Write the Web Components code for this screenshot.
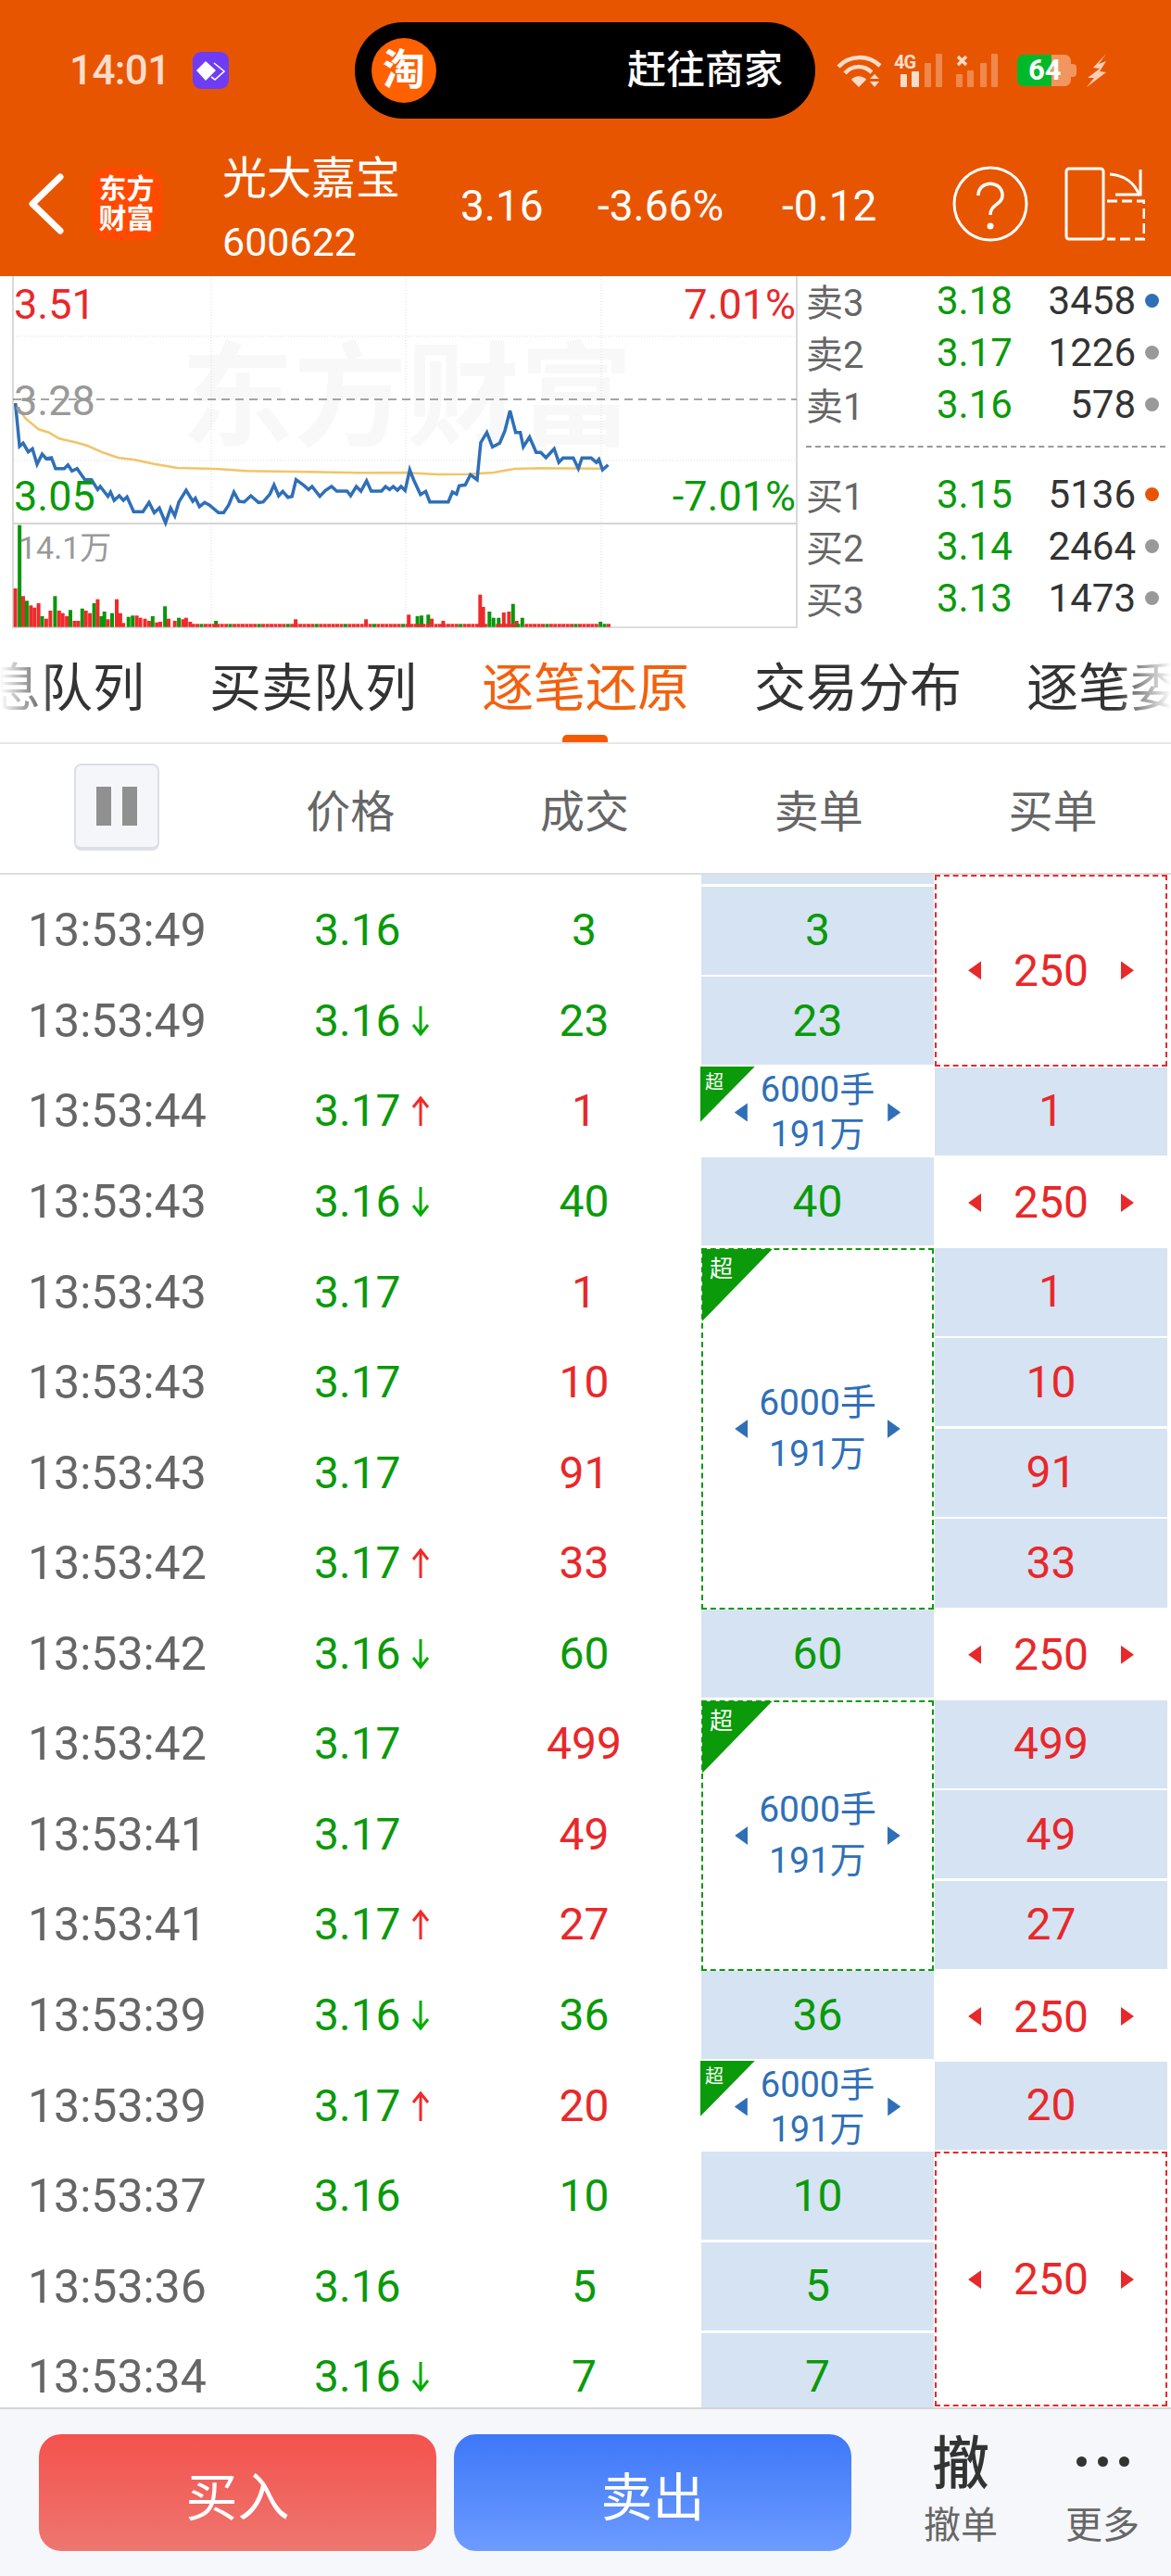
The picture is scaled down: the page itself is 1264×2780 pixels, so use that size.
<!DOCTYPE html>
<html lang="zh-CN">
<head>
<meta charset="utf-8">
<title>光大嘉宝</title>
<style>
  html, body { margin: 0; padding: 0; background: #fff; }
  body {
    width: 1264px;
    height: 2780px;
    overflow: hidden;
    font-family: Roboto, "Noto Sans CJK SC", sans-serif;
    --red: #e8282a;
    --green: #0a9a0a;
    --blue: #2f6fb8;
    --cell: #d6e3f2;
  }
  .top { display: flex; }
</style>
</head>
<body>
<status-strip></status-strip>
<quote-head></quote-head>
<div class="top">
  <mini-chart></mini-chart>
  <order-book></order-book>
</div>
<tab-strip active="2">
  <span>消息队列</span><span>买卖队列</span><span>逐笔还原</span><span>交易分布</span><span>逐笔委托</span>
</tab-strip>
<column-head></column-head>
<tick-table></tick-table>
<action-bar></action-bar>

<script>
// Base helper: open shadow root from a template string
class ShadowPart extends HTMLElement {
  constructor() {
    super();
    this.attachShadow({ mode: "open" });
    let t = document.createElement("template");
    t.innerHTML = this.markup;
    this.shadowRoot.appendChild(t.content.cloneNode(true));
  }
}

class StatusStrip extends ShadowPart {
  get markup() {
    return `
    <style>
      :host { display: flex; align-items: center; height: 128px; padding: 24px 0 0 75px; box-sizing: border-box; background: #e85500; color: #fff; }
      .time { font-size: 44px; font-weight: 500; color: #fbdccb; line-height: 50px; width: 103px; letter-spacing: -.6px; white-space: nowrap; }
      .app { margin-left: 30px; width: 39px; height: 40px; border-radius: 9px; background: #6f3cf5; }
      .pill { margin-left: 136px; width: 497px; height: 104px; border-radius: 52px; background: #000; display: flex; align-items: center; padding: 0 35px 0 18px; box-sizing: border-box; justify-content: space-between; }
      .tao { width: 70px; height: 70px; border-radius: 50%; background: #ff6000; font-size: 46px; font-weight: 700; text-align: center; line-height: 68px; }
      .go { font-size: 42px; font-weight: 500; line-height: 50px; }
      svg { display: block; flex: none; }
      .wifi { margin-left: 23px; }
      .sig { position: relative; margin-left: 12px; width: 52px; height: 37px; }
      .sig b { position: absolute; left: 0; top: -1px; font-size: 20px; line-height: 20px; font-weight: 700; color: #fbdccb; letter-spacing: -1px; }
      .x { margin-left: 15px; }
      .bat { margin-left: 20px; position: relative; width: 64px; height: 34px; }
      .bat i { position: absolute; inset: 0 6px 0 0; border-radius: 7px; background: linear-gradient(90deg, #00b92a 64%, #f2965f 64%); }
      .bat u { position: absolute; right: 0; top: 10px; width: 6px; height: 14px; border-radius: 0 4px 4px 0; background: #f2965f; }
      .bat b { position: absolute; left: 12px; top: 0; font-size: 31px; line-height: 34px; font-weight: 700; color: #fff; text-decoration: none; }
      .bolt { margin-left: 11px; }
    </style>
    <span class="time">14:01</span>
    <div class="app">
      <svg width="39" height="40" viewBox="0 0 39 40"><path d="M14 10 L25 20 L14 31 L4 20Z" fill="#fff"/><path d="M23 12 L34 21 L24 30 L20 27" fill="none" stroke="#fff" stroke-width="1.6"/></svg>
    </div>
    <div class="pill"><span class="tao">淘</span><span class="go">赶往商家</span></div>
    <svg class="wifi" width="50" height="37" viewBox="0 0 50 37" fill="none" stroke="#fbdccb" stroke-width="4.5">
      <path d="M2 14 C14 1 34 1 47 13"/><path d="M9 21 C17 12 29 12 38 20"/><path d="M16 28 L24 36 L32 28 C28 23 20 23 16 28Z" fill="#fbdccb" stroke="none"/>
      <path d="M41 22 L46 27 L36 27Z M36 30 L46 30 L41 36Z" fill="#fbdccb" stroke="none"/>
    </svg>
    <div class="sig">
      <b>4G</b>
      <svg width="52" height="37" viewBox="0 0 52 37"><rect x="7" y="22" width="7" height="14" rx="1" fill="#fbdccb"/><rect x="19" y="19" width="8" height="17" rx="1" fill="#fbdccb"/><rect x="33" y="10" width="7" height="26" rx="1" fill="#fff" opacity=".3"/><rect x="45" y="0" width="7" height="36" rx="1" fill="#fff" opacity=".3"/></svg>
    </div>
    <svg class="x" width="46" height="37" viewBox="0 0 46 37"><path d="M2 3 L11 12 M11 3 L2 12" stroke="#fbdccb" stroke-width="3.4"/><g fill="#fff" opacity=".3"><rect x="0" y="22" width="7" height="14" rx="1"/><rect x="12" y="18" width="7" height="18" rx="1"/><rect x="26" y="10" width="7" height="26" rx="1"/><rect x="38" y="0" width="7" height="36" rx="1"/></g></svg>
    <div class="bat"><i></i><u></u><b>64</b></div>
    <svg class="bolt" width="22" height="36" viewBox="0 0 22 36"><path d="M21 0 L7 15 L14 16 L1 26 L8 26 L0 36 L21 20 L14 19 L21 8 L13 11Z" fill="#fbcfb4"/></svg>
    `;
  }
}

class QuoteHead extends ShadowPart {
  get markup() {
    return `
    <style>
      :host { display: flex; align-items: center; height: 170px; padding-top: 13px; box-sizing: border-box; background: #e85500; color: #fff; }
      svg { display: block; flex: none; }
      .back { margin-left: 30px; }
      .logo { margin-left: 28px; width: 77px; height: 78px; border-radius: 20px; background: #ff4a00; font-size: 30px; font-weight: 700; line-height: 32px; text-align: center; display: flex; align-items: center; justify-content: center; }
      .name { margin: 14px 0 0 65px; width: 257px; }
      .name div:first-child { font-size: 48px; line-height: 60px; margin-bottom: 8px; }
      .name div:last-child { font-size: 43px; line-height: 60px; }
      .num { font-size: 46px; line-height: 56px; margin-top: 4px; flex: none; }
    </style>
    <svg class="back" width="40" height="66" viewBox="0 0 40 66"><path d="M35 4 L5 33 L35 62" fill="none" stroke="#fff" stroke-width="7" stroke-linecap="round" stroke-linejoin="round"/></svg>
    <div class="logo"><span>东方<br>财富</span></div>
    <div class="name"><div>光大嘉宝</div><div>600622</div></div>
    <span class="num" style="width:148px">3.16</span>
    <span class="num" style="width:199px">-3.66%</span>
    <span class="num" style="width:184px">-0.12</span>
    <svg width="82" height="82" viewBox="0 0 82 82" fill="none" stroke="#fff" stroke-width="3"><circle cx="41" cy="41" r="39"/><path d="M28 32 C28 15 54 15 54 32 C54 42 41 41 41 53" stroke-width="3.5"/><circle cx="41" cy="65" r="3.5" fill="#fff" stroke="none"/></svg>
    <svg style="margin-left:39px" width="87" height="80" viewBox="0 0 87 80" fill="none" stroke="#fff" stroke-width="3"><rect x="2" y="2" width="40" height="76" rx="3"/><path d="M49 8 C65 9 76 18 81 31"/><path d="M82 3 V30 H55"/><path d="M46 37 H86 V78 H46" stroke-dasharray="11 5"/></svg>
    `;
  }
}

class MiniChart extends ShadowPart {
  get markup() {
    return `
    <style>
      :host { display: block; position: relative; flex: none; width: 861px; height: 380px; overflow: hidden; background: #fff; }
      svg { display: block; position: absolute; inset: 0; }
      .mark { position: absolute; left: 195px; top: 64px; font-size: 122px; line-height: 136px; font-weight: 700; color: #f8f8f8; white-space: nowrap; }
      .lab { position: absolute; font-size: 45px; line-height: 48px; }
      .vol { font-size: 34px; line-height: 40px; color: #999; left: 20px; top: 273px; }
    </style>
    <span class="mark">东方财富</span>
    <svg id="plot" width="861" height="380" viewBox="0 0 861 380"></svg>
    <span class="lab" style="left:15px;top:7px;color:var(--red)">3.51</span>
    <span class="lab" style="right:2px;top:7px;color:var(--red)">7.01%</span>
    <span class="lab" style="left:15px;top:111px;color:#999">3.28</span>
    <span class="lab" style="left:15px;top:214px;color:var(--green)">3.05</span>
    <span class="lab" style="right:2px;top:214px;color:var(--green)">-7.01%</span>
    <span class="lab vol">14.1万</span>
    `;
  }

  connectedCallback() {
    // points read off the reference, in crop units (x/1.802, y/3 + 295)
    const price = [30,420,38,560,45,550,55,578,63,568,72,618,82,585,90,600,100,597,108,632,125,632,132,620,140,640,150,632,165,668,178,668,190,700,195,690,210,722,215,708,222,735,232,720,240,735,247,724,260,772,278,772,290,742,300,775,310,760,322,808,332,760,340,785,348,740,362,702,375,738,380,728,388,755,398,742,407,750,425,775,435,775,445,750,455,708,465,738,475,740,488,720,503,742,512,740,525,715,533,685,542,720,550,706,560,725,568,722,576,668,590,685,600,700,607,690,622,722,633,703,645,690,655,705,675,705,682,720,693,690,702,705,713,672,722,705,742,705,750,690,758,700,765,690,773,702,780,690,788,703,797,636,805,670,818,716,828,706,836,740,872,740,880,708,888,715,893,688,905,685,915,652,928,668,935,548,947,515,958,562,972,550,982,510,992,445,1003,515,1012,515,1018,562,1030,530,1043,580,1052,580,1062,597,1078,568,1087,612,1095,598,1115,598,1125,632,1132,598,1150,598,1160,612,1165,602,1172,636,1183,620];
    const avg = [30,425,50,470,75,505,95,515,115,535,150,548,170,558,200,580,230,597,260,603,300,617,345,630,420,633,480,640,600,643,700,646,790,645,850,651,910,650,960,645,1000,633,1050,631,1170,632];
    const tall = { 30:[1020,"r"],38:[815,"g"],45:[1045,"r"],52:[1060,"g"],60:[1075,"r"],67:[1082,"r"],75:[1068,"r"],82:[1110,"g"],90:[1118,"r"],98:[1092,"r"],107:[1045,"g"],115:[1092,"r"],122:[1100,"r"],130:[1110,"r"],137:[1090,"g"],145:[1125,"r"],152:[1125,"r"],160:[1085,"g"],167:[1092,"r"],175:[1100,"r"],183:[1068,"g"],190:[1055,"r"],197:[1110,"g"],203:[1095,"g"],210:[1120,"r"],218:[1100,"g"],227:[1055,"r"],234:[1100,"r"],240:[1132,"r"],250:[1112,"g"],258:[1108,"g"],266:[1108,"r"],273:[1115,"r"],282:[1118,"r"],290:[1125,"r"],297:[1110,"g"],305:[1130,"r"],312:[1128,"r"],321:[1078,"g"],328:[1118,"r"],340:[1125,"r"],348:[1115,"g"],356:[1120,"r"],362:[1115,"r"],370:[1128,"r"],420:[1125,"g"],575:[1120,"r"],712:[1120,"r"],795:[1105,"r"],812:[1110,"g"],820:[1108,"g"],833:[1105,"g"],840:[1118,"r"],862:[1125,"r"],934:[1040,"r"],940:[1080,"r"],952:[1095,"g"],960:[1115,"g"],970:[1115,"g"],980:[1098,"r"],990:[1095,"r"],998:[1070,"g"],1005:[1125,"r"],1016:[1115,"g"],1168:[1128,"g"] };
    const X = x => (x / 1.802).toFixed(1);
    const Y = y => (y / 3 - 3).toFixed(1);
    const line = a => { let s = ""; for (let i = 0; i < a.length; i += 2) s += X(a[i]) + "," + Y(a[i + 1]) + " "; return s; };
    const colors = { r: "#f02a2a", g: "#0a960a" };

    let grid = "";
    for (const x of [228, 438, 649]) grid += `<line x1="${x}" x2="${x}" y1="0" y2="380" stroke="#ddd" stroke-dasharray="1 2"/>`;
    for (const y of [65, 199]) grid += `<line x1="14" x2="860" y1="${y}" y2="${y}" stroke="#ddd" stroke-dasharray="1 2"/>`;

    let bars = "";
    for (const k of Object.keys(tall)) {
      const [top, c] = tall[k];
      bars += `<rect x="${X(+k) - 2}" y="${Y(top)}" width="4" height="${(1145 - top) / 3}" fill="${colors[c]}"/>`;
    }
    for (let x = 376; x < 1185; x += 8) {
      if (tall[x]) continue;
      bars += `<rect x="${X(x) - 2}" y="${Y(1135)}" width="4" height="3.4" fill="${x % 56 === 0 ? colors.g : colors.r}"/>`;
    }

    this.shadowRoot.getElementById("plot").innerHTML = `
      ${grid}
      <line x1="14" x2="14" y1="0" y2="380" stroke="#ccc" stroke-width="1.5"/>
      <line x1="860" x2="860" y1="0" y2="380" stroke="#ccc" stroke-width="1.5"/>
      <line x1="14" x2="860" y1="133" y2="133" stroke="#888" stroke-width="1.5" stroke-dasharray="9 6"/>
      <line x1="14" x2="860" y1="267" y2="267" stroke="#d5d5d5" stroke-width="2"/>
      <line x1="14" x2="860" y1="379" y2="379" stroke="#ddd" stroke-width="2"/>
      <polyline points="${line(avg)}" fill="none" stroke="#f2c469" stroke-width="2.5"/>
      <polyline points="${line(price)}" fill="none" stroke="#2f6fb8" stroke-width="3.5"/>
      ${bars}`;
  }
}

class OrderBook extends ShadowPart {
  get markup() {
    const row = (label, price, vol, dot) => `
      <div class="row"><span class="lab">${label}</span><span class="price">${price}</span><span class="vol">${vol}</span><i style="background:${dot}"></i></div>`;
    return `
    <style>
      :host { display: block; flex: 1; height: 380px; padding-left: 9px; box-sizing: border-box; overflow: hidden; }
      .row { display: grid; grid-template-columns: 141px 79px 136px 25px; align-items: center; height: 56px; font-size: 42px; color: #333; }
      .lab { color: #666; font-size: 40px; }
      .price { color: var(--green); white-space: nowrap; }
      .vol { text-align: right; }
      i { justify-self: end; width: 15px; height: 15px; border-radius: 50%; }
      .asks { margin-top: -3px; }
      hr { margin: 18px 6px 21px 0; border: 0; border-top: 2px dashed #999; }
    </style>
    <div class="asks">
      ${row("卖3", "3.18", "3458", "#2f6fb8")}
      ${row("卖2", "3.17", "1226", "#999")}
      ${row("卖1", "3.16", "578", "#999")}
    </div>
    <hr>
    ${row("买1", "3.15", "5136", "#e85500")}
    ${row("买2", "3.14", "2464", "#999")}
    ${row("买3", "3.13", "1473", "#999")}
    `;
  }
}

class TabStrip extends ShadowPart {
  get markup() {
    return `
    <style>
      :host { display: block; height: 125px; border-bottom: 2px solid #e6e6e6; box-sizing: border-box; overflow: hidden; }
      .track { display: flex; justify-content: center; gap: 70px; height: 100%; white-space: nowrap;
        -webkit-mask-image: linear-gradient(90deg, transparent 0, #000 60px, #000 1204px, transparent 1264px);
        mask-image: linear-gradient(90deg, transparent 0, #000 60px, #000 1204px, transparent 1264px); }
      ::slotted(span) { flex: none; position: relative; font-size: 56px; line-height: 130px; width: 224px; text-align: center; color: #333; }
      ::slotted(span.on) { color: #f2610f; }
    </style>
    <div class="track"><slot></slot></div>
    `;
  }

  connectedCallback() {
    const spans = this.querySelectorAll("span");
    const on = spans[+this.getAttribute("active")];
    on.className = "on";
    const bar = document.createElement("b");
    bar.style.cssText = "position:absolute;left:87px;bottom:-1px;width:49px;height:9px;border-radius:5px 5px 0 0;background:#f55a00";
    on.appendChild(bar);
  }
}

class ColumnHead extends ShadowPart {
  get markup() {
    return `
    <style>
      :host { display: grid; grid-template-columns: repeat(5, 1fr); align-items: center; justify-items: center; height: 141px; border-bottom: 2px solid #ddd; box-sizing: border-box; font-size: 48px; color: #666; }
      .pause { width: 92px; height: 94px; box-sizing: border-box; margin-top: -3px; display: flex; gap: 12px; justify-content: center; align-items: center; background: #f5f6fa; border: 2px solid #dcdfe6; border-bottom-width: 4px; border-radius: 8px; }
      .pause i { width: 16px; height: 42px; background: #909090; }
      span { margin: 0 2px 2px 0; }
    </style>
    <div class="pause"><i></i><i></i></div>
    <span>价格</span><span>成交</span><span>卖单</span><span>买单</span>
    `;
  }
}

// Bordered or plain cell with the two little triangles, optional 超 corner flag
class OrderBox extends ShadowPart {
  get markup() {
    return `
    <style>
      :host { display: flex; align-items: center; justify-content: center; box-sizing: border-box; position: relative; --tone: var(--red); gap: var(--gap, 35px); color: var(--tone); font-size: 48px; min-width: 0; }
      :host([side="sell"]) { --tone: var(--blue); --gap: 14px; font-size: 38px; line-height: 48px; text-align: center; }
      :host([side="sell"][size="big"]) { --gap: 12px; font-size: 39px; line-height: 55px; }
      :host([dash]) { border: 2px dashed var(--tone); }
      :host([side="sell"][dash]) { border-color: var(--green); }
      i { flex: none; width: 14px; height: 20px; background: var(--tone); }
      .l { clip-path: polygon(100% 0, 0 50%, 100% 100%); }
      .r { clip-path: polygon(0 0, 100% 50%, 0 100%); }
      .flag { display: none; position: absolute; left: -1px; top: -1px; width: 59px; height: 60px; background: var(--green); clip-path: polygon(0 0, 100% 0, 0 100%); }
      .flag span { position: absolute; left: 5px; top: 5px; font-size: 20px; line-height: 24px; color: #fff; }
      :host([flag]) .flag { display: block; }
      :host([size="big"]) .flag { width: 76px; height: 78px; }
      :host([size="big"]) .flag span { left: 8px; top: 7px; font-size: 25px; line-height: 30px; }
    </style>
    <div class="flag"><span>超</span></div>
    <i class="l"></i><div><slot></slot></div><i class="r"></i>
    `;
  }
}

class TickTable extends ShadowPart {
  get markup() {
    const ticks = [
      ["13:53:49", "3.16", "", "3", "g"], ["13:53:49", "3.16", "d", "23", "g"], ["13:53:44", "3.17", "u", "1", "r"],
      ["13:53:43", "3.16", "d", "40", "g"], ["13:53:43", "3.17", "", "1", "r"], ["13:53:43", "3.17", "", "10", "r"],
      ["13:53:43", "3.17", "", "91", "r"], ["13:53:42", "3.17", "u", "33", "r"], ["13:53:42", "3.16", "d", "60", "g"],
      ["13:53:42", "3.17", "", "499", "r"], ["13:53:41", "3.17", "", "49", "r"], ["13:53:41", "3.17", "u", "27", "r"],
      ["13:53:39", "3.16", "d", "36", "g"], ["13:53:39", "3.17", "u", "20", "r"], ["13:53:37", "3.16", "", "10", "g"],
      ["13:53:36", "3.16", "", "5", "g"], ["13:53:34", "3.16", "d", "7", "g"]
    ];
    const arrows = {
      d: `<svg width="20" height="34" viewBox="0 0 20 34" fill="none" stroke="#00ad00" stroke-width="3"><path d="M10 1 V31 M2 21 L10 31 L18 21"/></svg>`,
      u: `<svg width="20" height="34" viewBox="0 0 20 34" fill="none" stroke="#f02a2a" stroke-width="3"><path d="M10 33 V3 M2 13 L10 3 L18 13"/></svg>`
    };
    const rowOf = i => i + 2;
    const six = `6000手<br>191万`;

    let html = `<div class="cell sellc" style="grid-area:1/4"></div>`;
    ticks.forEach((t, i) => {
      const r = rowOf(i), tone = t[4] === "r" ? "red" : "grn";
      html += `<span class="time" style="grid-area:${r}/1">${t[0]}</span>`;
      html += `<span class="price" style="grid-area:${r}/2">${t[1]}${t[2] ? arrows[t[2]] : ""}</span>`;
      html += `<span class="vol ${tone}" style="grid-area:${r}/3">${t[3]}</span>`;
    });
    // sell column: volume cells with single green numbers
    for (const i of [0, 1, 3, 8, 12, 14, 15, 16]) {
      html += `<div class="cell sellc grn" style="grid-area:${rowOf(i)}/4">${ticks[i][3]}</div>`;
    }
    html += `<order-box class="sellc" side="sell" flag style="grid-area:${rowOf(2)}/4">${six}</order-box>`;
    html += `<order-box class="sellc" side="sell" flag style="grid-area:${rowOf(13)}/4">${six}</order-box>`;
    html += `<order-box class="sellc" side="sell" size="big" flag dash style="grid-area:${rowOf(4)}/4/span 4">${six}</order-box>`;
    html += `<order-box class="sellc" side="sell" size="big" flag dash style="grid-area:${rowOf(9)}/4/span 3">${six}</order-box>`;
    // buy column
    for (const i of [2, 4, 5, 6, 7, 9, 10, 11, 13]) {
      html += `<div class="cell red" style="grid-area:${rowOf(i)}/5">${ticks[i][3]}</div>`;
    }
    html += `<order-box dash style="grid-area:1/5/span 3;margin-bottom:1px">250</order-box>`;
    for (const i of [3, 8, 12]) html += `<order-box style="grid-area:${rowOf(i)}/5">250</order-box>`;
    html += `<order-box dash style="grid-area:${rowOf(14)}/5/span 3;height:275px;align-self:start">250</order-box>`;

    return `
    <style>
      :host { display: block; height: 1654px; overflow: hidden; font-size: 48px; }
      .grid { display: grid; grid-template-columns: 339px 163px 255px 252px 251px 4px; grid-template-rows: 12.5px repeat(17, 97.57px); }
      .time, .price, .vol { display: flex; align-items: center; line-height: 1; padding-bottom: 2px; }
      .time { color: #666; padding-left: 30px; font-size: 50px; white-space: nowrap; }
      .price { color: var(--green); gap: 11px; }
      .vol { justify-content: center; padding-left: 2px; }
      .red { color: var(--red); }
      .grn { color: var(--green); }
      .cell { display: flex; align-items: center; justify-content: center; background: var(--cell); margin-bottom: 2.5px; padding-bottom: 1px; }
      .sellc { margin-right: 1px; }
      svg { display: block; flex: none; }
    </style>
    <div class="grid">${html}</div>
    `;
  }
}

class ActionBar extends ShadowPart {
  get markup() {
    return `
    <style>
      :host { display: flex; height: 183px; box-sizing: border-box; padding: 27px 0 0 42px; background: #f5f7fa; border-top: 2px solid #d4d4d4; }
      .btn { width: 429px; height: 126px; border-radius: 24px; color: #fff; font-size: 56px; display: flex; align-items: center; justify-content: center; }
      .buy { background: linear-gradient(#f4524d, #ee7670); }
      .sell { margin-left: 19px; background: linear-gradient(#3d78f8, #6d9bff); }
      .tool { display: flex; flex-direction: column; align-items: center; width: 100px; color: #666; font-size: 40px; line-height: 46px; }
      .tool .big { height: 76px; font-size: 62px; line-height: 66px; font-weight: 500; color: #333; }
      .undo { margin-left: 68px; }
      .more { margin-left: 53px; }
      .dots { height: 76px; display: flex; gap: 12px; padding-top: 24px; box-sizing: border-box; }
      .dots i { width: 11px; height: 11px; border-radius: 50%; background: #333; }
    </style>
    <div class="btn buy">买入</div>
    <div class="btn sell">卖出</div>
    <div class="tool undo"><span class="big">撤</span><span>撤单</span></div>
    <div class="tool more"><div class="dots"><i></i><i></i><i></i></div><span>更多</span></div>
    `;
  }
}

customElements.define("status-strip", StatusStrip);
customElements.define("quote-head", QuoteHead);
customElements.define("mini-chart", MiniChart);
customElements.define("order-book", OrderBook);
customElements.define("tab-strip", TabStrip);
customElements.define("column-head", ColumnHead);
customElements.define("order-box", OrderBox);
customElements.define("tick-table", TickTable);
customElements.define("action-bar", ActionBar);
</script>
</body>
</html>
